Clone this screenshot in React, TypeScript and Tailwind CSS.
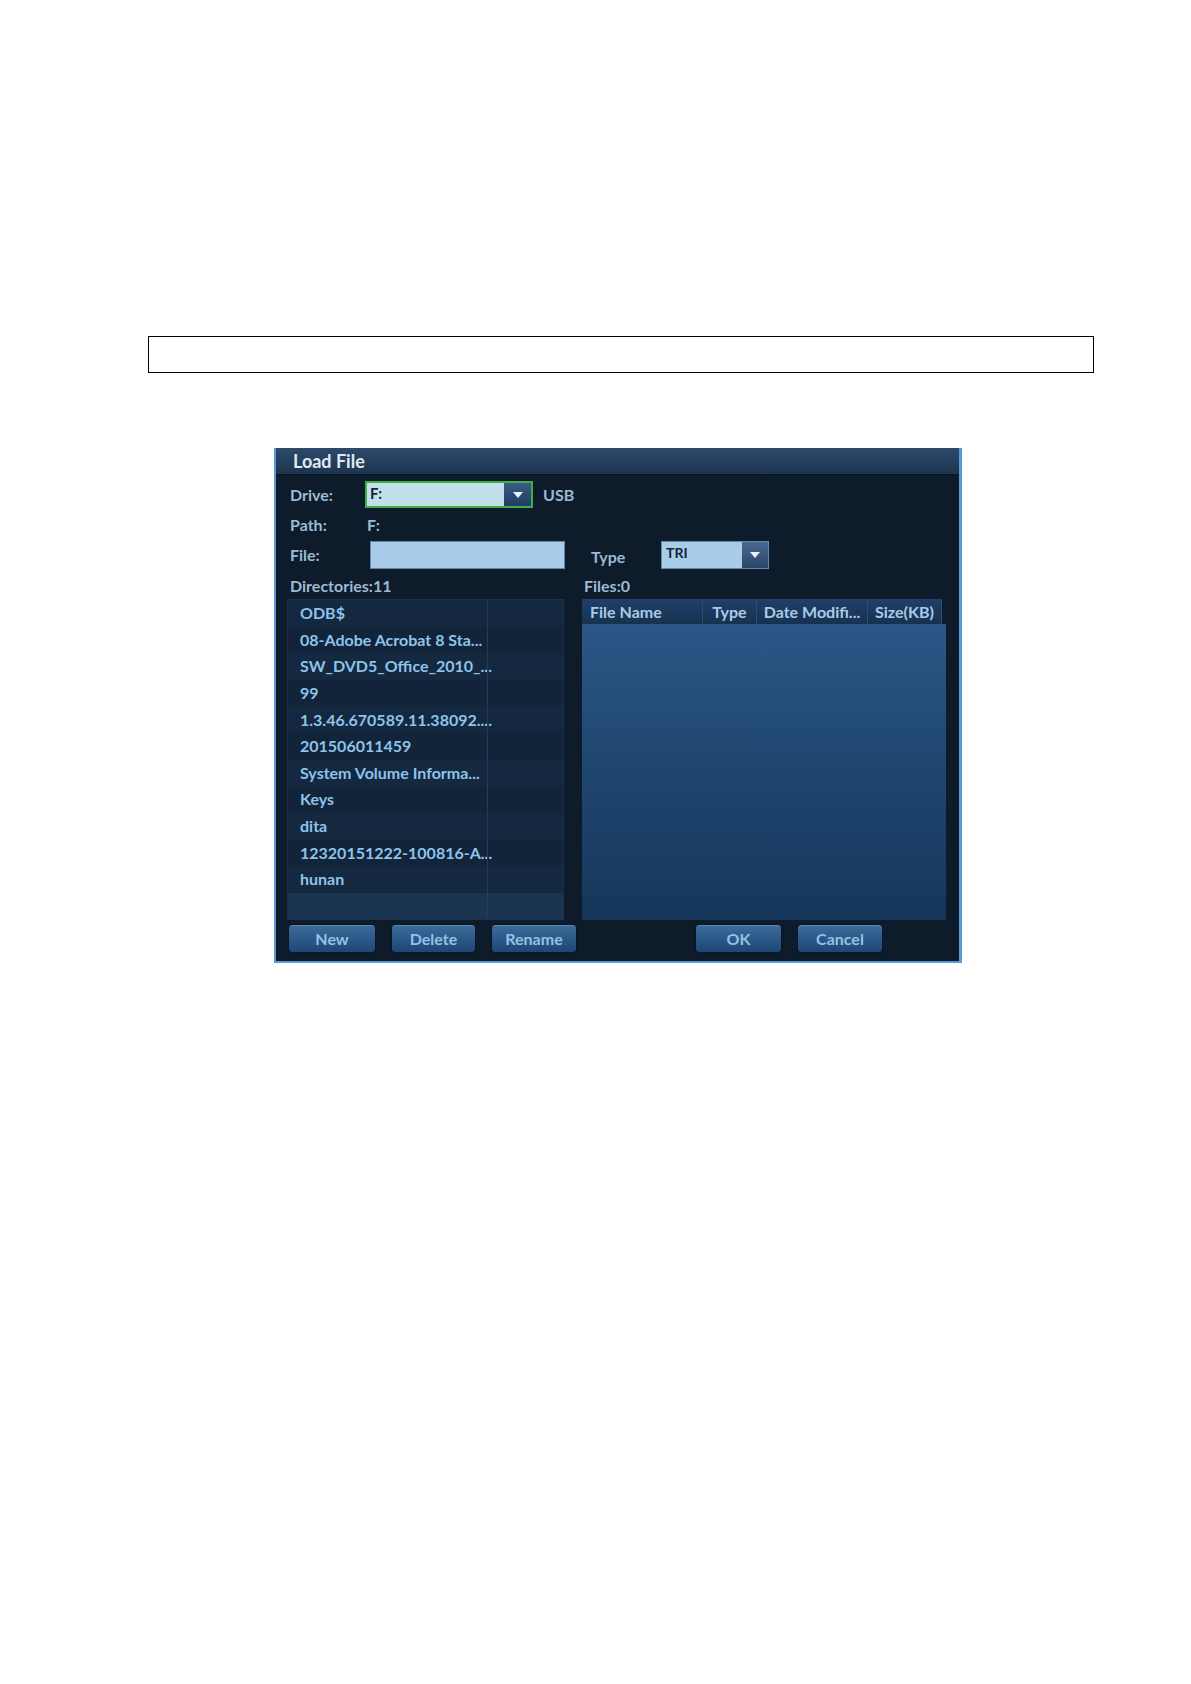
import React from "react";

const dirs = [
  "ODB$",
  "08-Adobe Acrobat 8 Sta...",
  "SW_DVD5_Office_2010_...",
  "99",
  "1.3.46.670589.11.38092....",
  "201506011459",
  "System Volume Informa...",
  "Keys",
  "dita",
  "12320151222-100816-A...",
  "hunan",
];

function Arrow() {
  return (
    <svg width="10" height="6" viewBox="0 0 10 6">
      <path d="M0 0 L10 0 L5 6 Z" fill="#e8f0f8" />
    </svg>
  );
}

function Btn({ label, w }: { label: string; w: string }) {
  return (
    <div
      className={`${w} h-[29px] rounded-[4px] border border-[#0a1626] bg-gradient-to-b from-[#3d6d9c] to-[#1d4774] flex items-center justify-center text-[16px] font-bold text-[#93c2e6] shadow-[inset_0_1px_0_rgba(150,190,230,0.35)]`}
    >
      {label}
    </div>
  );
}

export default function App() {
  return (
    <div className="w-[1191px] h-[1684px] bg-white overflow-hidden font-['Lato','Liberation_Sans',sans-serif]">
      <div className="ml-[148px] mt-[336px] w-[946px] h-[37px] border-[1.5px] border-black" />

      <div className="ml-[274px] mt-[75px] w-[688px] h-[515px] bg-[#0e1b2b] border-l-2 border-r-[3px] border-b-2 border-[#5b9ad8] flex flex-col">
        <div className="h-[27px] bg-gradient-to-b from-[#2d4a6a] to-[#1c3550] border-b border-[#0a1524] flex items-center pl-[17px]">
          <span className="text-[18px] font-bold text-[#e2e9f1]">Load File</span>
        </div>

        <div className="pl-[11px] flex flex-col">
          {/* Drive */}
          <div className="mt-[6px] h-[27px] flex items-center pl-[3px]">
            <span className="w-[75px] text-[16px] font-bold text-[#9bbad4]">Drive:</span>
            <div className="w-[168px] h-[27px] border-[2.5px] border-[#3eae48] bg-[#c2e0ea] flex">
              <span className="flex-1 pl-[3px] text-[15px] font-bold text-[#14243a] leading-[20px]">F:</span>
              <div className="w-[27px] bg-gradient-to-b from-[#3a5c86] to-[#1f3c62] flex items-center justify-center">
                <Arrow />
              </div>
            </div>
            <span className="ml-[10px] text-[16px] font-bold text-[#9bbad4]">USB</span>
          </div>

          {/* Path */}
          <div className="mt-[5px] h-[24px] flex items-center pl-[3px]">
            <span className="w-[77px] text-[16px] font-bold text-[#9bbad4]">Path:</span>
            <span className="text-[16px] font-bold text-[#9bbad4]">F:</span>
          </div>

          {/* File */}
          <div className="mt-[4px] h-[28px] flex items-center pl-[3px]">
            <span className="w-[80px] text-[16px] font-bold text-[#9bbad4]">File:</span>
            <div className="w-[195px] h-[28px] bg-[#a9cde9] border border-[#5f89ad]" />
            <span className="ml-[26px] w-[70px] mt-[3px] text-[16px] font-bold text-[#9bbad4]">Type</span>
            <div className="w-[108px] h-[28px] bg-[#a9cde9] border border-[#5f89ad] flex">
              <span className="flex-1 pl-[4px] text-[14px] font-bold text-[#14243a] leading-[22px]">TRI</span>
              <div className="w-[26px] bg-gradient-to-b from-[#4a6a90] to-[#2a4668] flex items-center justify-center">
                <Arrow />
              </div>
            </div>
          </div>

          {/* counts */}
          <div className="h-[30px] flex items-center pt-[4px]">
            <span className="w-[297px] pl-[3px] text-[16px] font-bold text-[#9bbad4]">Directories:11</span>
            <span className="text-[16px] font-bold text-[#9bbad4]">Files:0</span>
          </div>

          {/* lists */}
          <div className="h-[321px] flex">
            <div className="w-[277px] bg-[#13263c] border border-[#1a3048] relative flex flex-col">
              <div className="absolute top-0 bottom-0 left-[199px] w-px bg-[#223d5a]" />
              {dirs.map((d, i) => (
                <div
                  key={d}
                  className={`h-[26.6px] flex items-center pl-[12px] text-[16px] font-bold text-[#8ec3ea] whitespace-nowrap ${
                    i % 2 === 0 ? "bg-[#14283f]" : "bg-[#12243a]"
                  }`}
                >
                  {d}
                </div>
              ))}
              <div className="flex-1 bg-[#1b3451]" />
            </div>

            <div className="ml-[18px] w-[364px] flex flex-col">
              <div className="h-[25px] mr-[4px] flex bg-gradient-to-b from-[#20406a] to-[#17324f] text-[16px] font-bold text-[#a9cbe8] whitespace-nowrap">
                <div className="w-[121px] pl-[8px] flex items-center border-r border-[#2c4c72]">File Name</div>
                <div className="w-[54px] flex items-center justify-center border-r border-[#2c4c72]">Type</div>
                <div className="w-[111px] flex items-center justify-center border-r border-[#2c4c72]">Date Modifi...</div>
                <div className="flex-1 flex items-center justify-center border-r border-[#2c4c72]">Size(KB)</div>
              </div>
              <div className="flex-1 bg-gradient-to-b from-[#2c5686] via-[#1f4670] to-[#153659]" />
            </div>
          </div>

          {/* buttons */}
          <div className="mt-[4px] flex pl-[1px]">
            <Btn label="New" w="w-[88px]" />
            <div className="ml-[15px]">
              <Btn label="Delete" w="w-[85px]" />
            </div>
            <div className="ml-[15px]">
              <Btn label="Rename" w="w-[86px]" />
            </div>
            <div className="ml-[118px]">
              <Btn label="OK" w="w-[87px]" />
            </div>
            <div className="ml-[15px]">
              <Btn label="Cancel" w="w-[86px]" />
            </div>
          </div>
        </div>
      </div>
    </div>
  );
}
